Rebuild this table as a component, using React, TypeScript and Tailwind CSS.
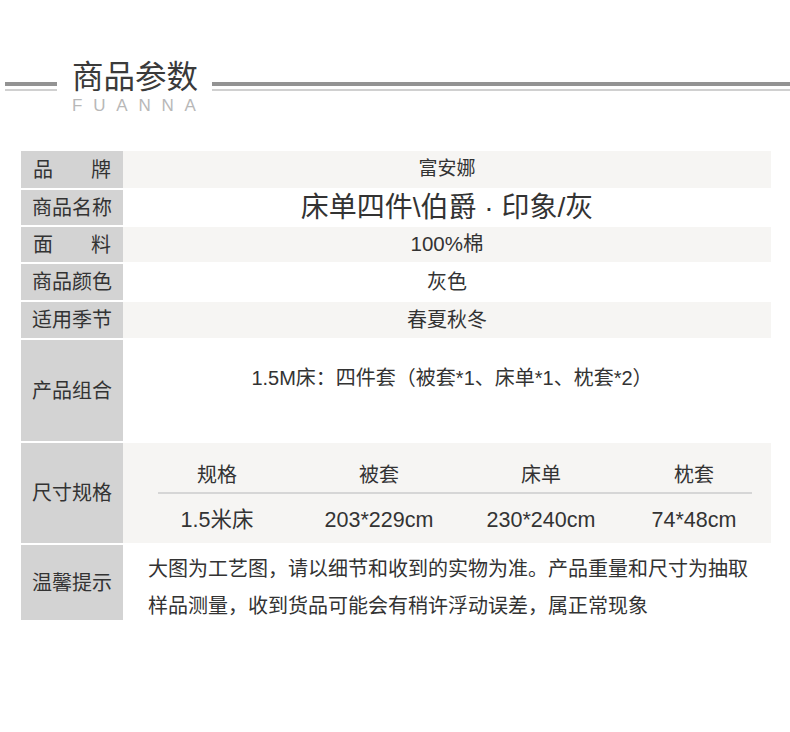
import React from "react";

const font = { fontFamily: '"Liberation Sans", "Noto Sans CJK SC", sans-serif' };

function Label({ children, spread }: { children: React.ReactNode; spread?: string[] }) {
  return (
    <div className="w-[102px] shrink-0 bg-[#d3d3d3] flex items-center justify-center text-[20px] text-[#333333]">
      {spread ? (
        <div className="w-[78px] flex justify-between">
          {spread.map((s) => (
            <span key={s}>{s}</span>
          ))}
        </div>
      ) : (
        children
      )}
    </div>
  );
}

export default function App() {
  const heads = ["规格", "被套", "床单", "枕套"];
  const vals = ["1.5米床", "203*229cm", "230*240cm", "74*48cm"];
  return (
    <div className="w-[790px] h-[732px] bg-white relative overflow-hidden" style={font}>
      {/* header */}
      <div className="flex h-[151px]">
        <div className="ml-[5px] w-[52px] mt-[82px]">
          <div className="h-[4px] bg-[#939393]" />
          <div className="h-[2px] bg-[#d0d0d0] mt-[3px]" />
        </div>
        <div className="ml-[15px] w-[140px] mt-[58px] flex flex-col">
          <div className="text-[31.5px] leading-[38px] text-[#3a3a3a] whitespace-nowrap">商品参数</div>
          <div className="text-[17px] leading-[18px] tracking-[10.8px] text-[#b8b8b8] mt-[1px] whitespace-nowrap">FUANNA</div>
        </div>
        <div className="flex-1 mt-[82px]">
          <div className="h-[4px] bg-[#939393]" />
          <div className="h-[2px] bg-[#d0d0d0] mt-[3px]" />
        </div>
      </div>

      {/* table */}
      <div className="ml-[21px] w-[750px] flex flex-col gap-[2px] text-[#333333]">
        <div className="flex h-[37px]">
          <Label spread={["品", "牌"]} />
          <div className="flex-1 bg-[#f6f5f3] flex items-center justify-center text-[19px]">富安娜</div>
        </div>
        <div className="flex h-[35px]">
          <Label>商品名称</Label>
          <div className="flex-1 bg-white flex items-center justify-center text-[28px] whitespace-nowrap">
            床单四件\伯爵 · 印象/灰
          </div>
        </div>
        <div className="flex h-[35px]">
          <Label spread={["面", "料"]} />
          <div className="flex-1 bg-[#f6f5f3] flex items-center justify-center text-[20.5px]">100%棉</div>
        </div>
        <div className="flex h-[36px]">
          <Label>商品颜色</Label>
          <div className="flex-1 bg-white flex items-center justify-center text-[20px]">灰色</div>
        </div>
        <div className="flex h-[36px]">
          <Label>适用季节</Label>
          <div className="flex-1 bg-[#f6f5f3] flex items-center justify-center text-[20px]">春夏秋冬</div>
        </div>
        <div className="flex h-[101px]">
          <Label>产品组合</Label>
          <div className="flex-1 bg-white pt-[24px] pl-[10px] text-center text-[20px] leading-[28px] whitespace-nowrap">
            1.5M床：四件套（被套*1、床单*1、枕套*2）
          </div>
        </div>
        <div className="flex h-[100px]">
          <Label>尺寸规格</Label>
          <div className="flex-1 bg-[#f6f5f3] pl-[16px] pt-[17px] flex flex-col text-[20px]">
            <div className="grid grid-cols-[156px_168px_156px_150px] h-[28px] items-center text-center">
              {heads.map((h) => (
                <div key={h}>{h}</div>
              ))}
            </div>
            <div className="ml-[19px] w-[594px] h-[2px] bg-[#d6d6d6] mt-[4px]" />
            <div className="grid grid-cols-[156px_168px_156px_150px] h-[28px] items-center text-center mt-[10px] text-[21.5px]">
              {vals.map((v) => (
                <div key={v}>{v}</div>
              ))}
            </div>
          </div>
        </div>
        <div className="flex h-[75px]">
          <Label>温馨提示</Label>
          <div className="flex-1 bg-white pl-[25px] pt-[6px] text-[20px] leading-[37px]">
            <div className="whitespace-nowrap">大图为工艺图，请以细节和收到的实物为准。产品重量和尺寸为抽取</div>
            <div className="whitespace-nowrap">样品测量，收到货品可能会有稍许浮动误差，属正常现象</div>
          </div>
        </div>
      </div>
    </div>
  );
}
